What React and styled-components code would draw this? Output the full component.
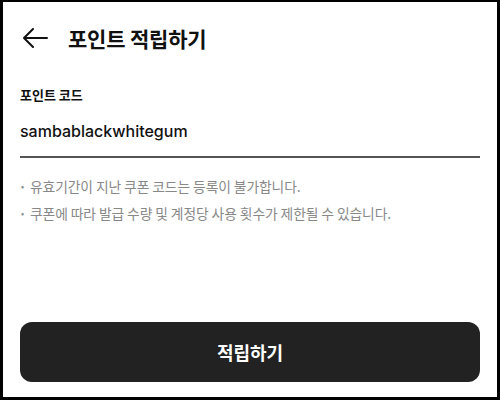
import styled, { createGlobalStyle } from "styled-components";

const GlobalStyle = createGlobalStyle`
  html, body {
    margin: 0;
    padding: 0;
    background: #000;
  }
  body {
    font-family: "Noto Sans CJK KR", "Noto Sans", sans-serif;
    color: #111;
  }
`;

export default function App() {
  return (
    <>
      <GlobalStyle />
      <Frame>
        <Screen>
          <Header>
            <BackButton aria-label="back">
              <svg width="26" height="20" viewBox="0 0 26 20" fill="none">
                <path d="M25 10H2M11 1L2 10l9 9" stroke="#111" strokeWidth="2" strokeLinecap="round" strokeLinejoin="round" />
              </svg>
            </BackButton>
            <Title>포인트 적립하기</Title>
          </Header>

          <Field>
            <Label>포인트 코드</Label>
            <Input defaultValue="sambablackwhitegum" />
          </Field>

          <Notes>
            <Note>유효기간이 지난 쿠폰 코드는 등록이 불가합니다.</Note>
            <Note>쿠폰에 따라 발급 수량 및 계정당 사용 횟수가 제한될 수 있습니다.</Note>
          </Notes>

          <Spacer />
          <SubmitButton>적립하기</SubmitButton>
        </Screen>
      </Frame>
    </>
  );
}

const Frame = styled.div`
  width: 500px;
  height: 400px;
  box-sizing: border-box;
  padding: 2px 3px 3px 3px;
  background: #000;
`;

const Screen = styled.div`
  height: 100%;
  background: #fff;
  display: flex;
  flex-direction: column;
  padding: 0 17px 15px 17px;
  box-sizing: border-box;
`;

const Header = styled.div`
  height: 72px;
  display: flex;
  align-items: center;
  gap: 20px;
`;

const BackButton = styled.button`
  border: none;
  background: transparent;
  padding: 0;
  margin-left: 2px;
  display: flex;
  align-items: center;
  cursor: pointer;
`;

const Title = styled.h1`
  margin: 0;
  font-size: 21px;
  font-weight: 700;
  letter-spacing: -0.2px;
  color: #111;
`;

const Field = styled.div`
  display: flex;
  flex-direction: column;
  margin-top: 12px;
`;

const Label = styled.label`
  font-size: 13px;
  font-weight: 600;
  color: #111;
  line-height: 18px;
`;

const Input = styled.input`
  border: none;
  border-bottom: 2px solid #555;
  outline: none;
  padding: 0 0 15px 0;
  margin-top: 17px;
  font-family: "Inter", "Noto Sans", sans-serif;
  font-size: 16px;
  font-weight: 500;
  color: #111;
  background: transparent;
`;

const Notes = styled.ul`
  list-style: none;
  margin: 19px 0 0 0;
  padding: 0;
  display: flex;
  flex-direction: column;
  gap: 8px;
`;

const Note = styled.li`
  font-size: 13.8px;
  color: #888;
  line-height: 19px;
  letter-spacing: -0.1px;
  &::before {
    content: "•";
    margin: 0 6px 0 1px;
    font-size: 9px;
    vertical-align: 2px;
  }
`;

const Spacer = styled.div`
  flex: 1;
`;

const SubmitButton = styled.button`
  height: 60px;
  border: none;
  border-radius: 12px;
  background: #222;
  color: #fff;
  font-family: "Noto Sans CJK KR", sans-serif;
  font-size: 18px;
  font-weight: 700;
  cursor: pointer;
`;
